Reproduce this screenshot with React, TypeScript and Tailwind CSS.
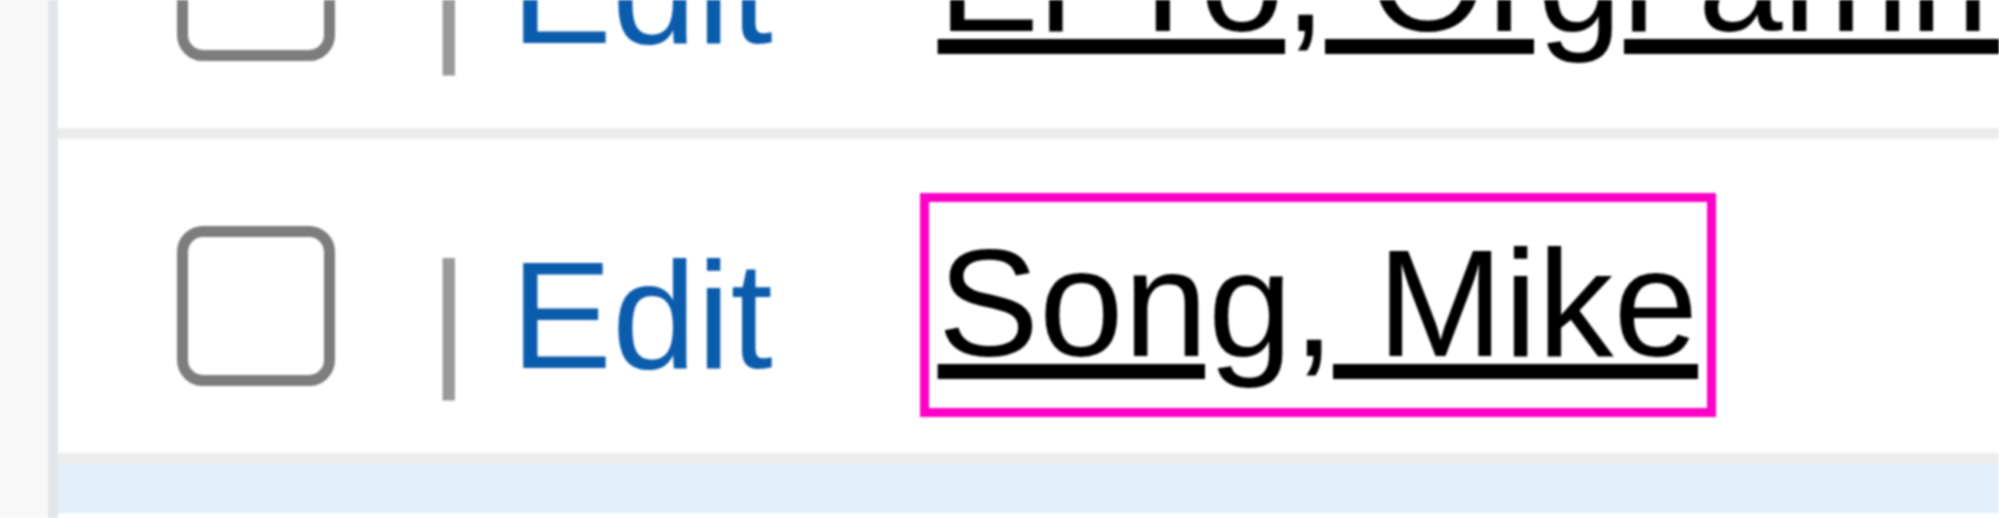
import React from 'react';

type Person = { id: number; name: string; highlighted?: boolean };

const people: Person[] = [
  { id: 1, name: 'El Yo, Orgi amm' },
  { id: 2, name: 'Song, Mike', highlighted: true },
];

function Checkbox() {
  return <div className="w-[158px] h-[160px] shrink-0 rounded-[26px] border-[11px] border-[#7d7d7d] bg-white" />;
}

function Row({ person }: { person: Person }) {
  return (
    <div className="flex items-start h-[314px] bg-white">
      <div className="ml-[119px] mt-[87px] shrink-0">
        <Checkbox />
      </div>
      <div className="ml-[94px] mt-[100px] shrink-0 text-[152px] leading-[152px] whitespace-nowrap">
        <span className="text-[#9a9a9a]">|</span>{' '}
        <a className="text-[#0b5cad]">Edit</a>
      </div>
      <div
        className={`ml-[147px] mt-[54px] shrink-0 border-[9px] px-[9px] pt-[25px] pb-[29px] ${
          person.highlighted ? 'border-[#ff00c8]' : 'border-transparent'
        }`}
      >
        <a className="block text-[152px] leading-[152px] text-black underline whitespace-nowrap">
          {person.name}
        </a>
      </div>
    </div>
  );
}

export default function App() {
  return (
    <div
      className="w-[1999px] h-[518px] overflow-hidden bg-white flex blur-[1px]"
      style={{ fontFamily: '"Liberation Sans", Arial, sans-serif' }}
    >
      {/* page gutter */}
      <div className="w-[48px] shrink-0 bg-[#f8f8f8]" />
      <div className="w-[10px] shrink-0 bg-[#e2e6ea]" />

      <div className="flex-1 min-w-0 overflow-hidden flex flex-col">
        <div className="-mt-[186px] flex flex-col">
          {people.map((p) => (
            <React.Fragment key={p.id}>
              <Row person={p} />
              <div className="h-[11px] bg-[#ececec]" />
            </React.Fragment>
          ))}
          {/* selected row below */}
          <div className="h-[49px] bg-[#e2f0fb]" />
          <div className="h-[5px] bg-white" />
        </div>
      </div>
    </div>
  );
}
